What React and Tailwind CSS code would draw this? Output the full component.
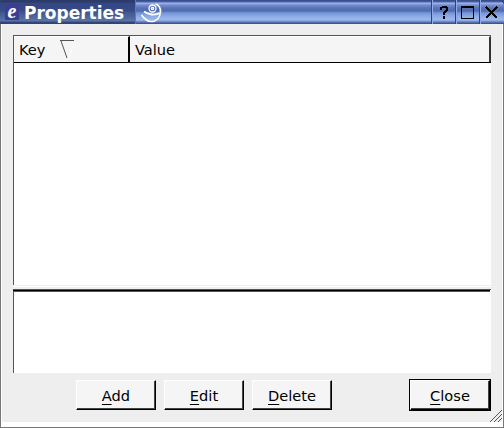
import React from "react";

function ActionButton({ label, className = "" }) {
  return (
    <button className={`h-[30px] w-20 shrink-0 border border-t-white border-l-white border-r-black border-b-black bg-[#f5f5f5] text-center leading-[29px] shadow-[inset_-1px_-1px_0_#444] ${className}`}>
      <span className="underline decoration-1 underline-offset-[3px]">{label[0]}</span>{label.slice(1)}
    </button>
  );
}

function TitleBar() {
  return (
    <header className="flex h-6 shrink-0 overflow-hidden bg-[#344883] text-white">
      <div className="flex h-6 w-[135px] shrink-0 items-start rounded-tl-[2px] bg-[linear-gradient(#2d3b69_0px,#2d3b69_2px,#344783_3px,#384b89_11px,#40558e_12px,#4d659d_17px,#5c75a8_21px,#36477d_22px,#30406e_24px)]">
        <div className="mt-1 ml-[5px] flex h-4 w-[14px] justify-center bg-[#3e3d94] font-['Liberation_Serif',serif] text-[20px] leading-[14px] font-bold italic">e</div>
        <h1 className="ml-[5px] font-['DejaVu_Sans',sans-serif] text-[17px] leading-[27px] font-bold whitespace-nowrap">Properties</h1>
      </div>
      <div className="flex h-6 flex-1 rounded-tl-[3px] rounded-tr-[6px] bg-[linear-gradient(#344883_0px,#4862a7_2px,#a3baf0_3px,#758fce_5px,#5873b5_8px,#506cb0_11px,#7796d8_13px,#90afe8_17px,#9bb9ef_20px,#617bb8_22px,#354779_24px)]">
        <div className="w-[296px] shrink-0 border-l border-[#6179b5]">
          <svg className="ml-[4px]" width="24" height="24" fill="none" stroke="white">
            <circle cx="12.5" cy="8.5" r="3.5" strokeWidth="1.3" />
            <circle cx="12.5" cy="8.5" r="1.1" strokeWidth="1.4" />
            <path d="M15.5 4C19 5 20.5 8 20.5 11.5C20 17.5 16.5 21.5 11.5 21.5C7.5 21.5 4 18.5 1.5 15" strokeWidth="1.7" />
            <path d="M4 11.5C8 14.5 15 16 19.5 13" strokeWidth="1.8" />
          </svg>
        </div>
        <div className="flex w-6 items-center justify-center border-l border-[#304378] shadow-[inset_1px_0_#92aae5]">
          <svg width="18" height="18" shapeRendering="crispEdges" fill="black"><path d="M5 4h2V3h5v1h1v4h-1v1h-1v1h-1v2H8V9h1V8h1V7h1V5H7v2H5zM8 13h2v3H8z" /></svg>
        </div>
        <div className="flex w-6 items-center justify-center border-l border-[#304378] shadow-[inset_1px_0_#92aae5]">
          <svg width="14" height="14" shapeRendering="crispEdges" fill="none" stroke="black"><path d="M.5 1v12.5h12V1" /><path d="M0 2h13" strokeWidth="2" /></svg>
        </div>
        <div className="flex w-[25px] items-center justify-center border-l border-[#304378] shadow-[inset_1px_0_#92aae5]">
          <svg width="14" height="14" shapeRendering="crispEdges" fill="none" stroke="black" strokeWidth="2"><path d="M1 2l11 11M12 2L1 13" /></svg>
        </div>
      </div>
    </header>
  );
}

export default function App() {
  return (
    <div className="flex h-[428px] w-[504px] flex-col overflow-hidden bg-white font-['DejaVu_Sans',sans-serif] text-[14.6px] text-black">
      <TitleBar />
      <main className="flex h-[404px] flex-col border-r border-b border-l border-[#777] bg-white px-px pb-[5px]">
        <div className="flex flex-1 flex-col bg-[#eee] pt-[11px] pl-[11px]">
          <div className="flex h-[250px] w-[478px] flex-col border-l border-[#555] bg-white">
            <div className="flex h-7 w-[477px] border-t border-b border-t-[#555] border-b-black bg-[#f5f5f5]">
              <div className="flex w-[116px] border-t border-r-2 border-t-white border-r-black pl-[5px] leading-[25px]">
                <span className="w-7">Key</span>
                <svg className="mt-[2px] ml-[13px]" width="16" height="20" fill="none"><path d="M14.5 2.5L8.5 19" stroke="white" /><path d="M0 1.5h14M1 2l6 17" stroke="#555" /></svg>
              </div>
              <div className="flex-1 border-t border-r-2 border-t-white border-r-[#333] pl-[5px] leading-[25px]">Value</div>
            </div>
          </div>
          <div className="h-px w-[478px] bg-[#eee]" />
          <div className="h-px w-[478px] bg-white" />
          <div className="h-0.5 w-[478px]" />
          <div className="h-[84px] w-[478px] border-t border-l border-[#555] bg-white">
            <div className="-ml-px h-0.5 w-[477px] border-t border-b border-t-black border-b-[#555]" />
          </div>
          <div className="flex pt-[6px] pl-[63px]">
            <ActionButton label="Add" className="mt-px" />
            <ActionButton label="Edit" className="mt-px ml-2" />
            <ActionButton label="Delete" className="mt-px ml-2" />
            <div className="ml-[77px] h-8 w-[82px] border border-black"><ActionButton label="Close" /></div>
          </div>
          <svg className="-mt-px ml-auto" width="13" height="12" stroke="#555" shapeRendering="crispEdges"><path d="M1 12L13 0M5 12L13 4M9 12L13 8" /></svg>
        </div>
      </main>
    </div>
  );
}
